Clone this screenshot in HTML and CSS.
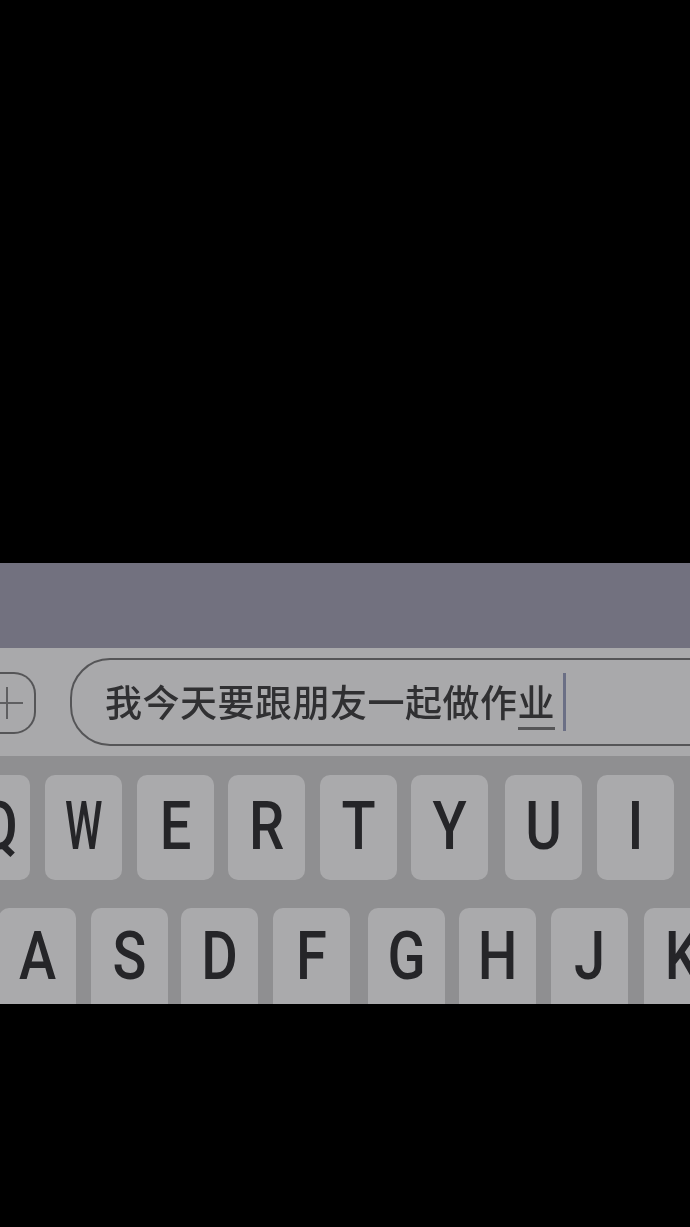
FILE: index.html
```html
<!DOCTYPE html>
<html lang="zh-CN">

<head>
	<meta charset="UTF-8">
	<meta name="viewport" content="width=device-width, initial-scale=1.0">
	<title>Keyboard</title>
	<link rel="stylesheet" href="styles.css">
</head>

<body>
	<div class="screen">
		<div class="band"></div>

		<div class="input-bar">
			<div class="plus-btn">
				<svg class="plus-icon" width="24" height="36" viewBox="0 0 24 36">
					<path d="M7 2V34M0 18H23" fill="none" stroke="#5f5f61" stroke-width="2" />
				</svg>
			</div>
			<div class="pill">
				<span class="pill-text">我今天要跟朋友一起做作<span class="composing">业</span></span>
				<span class="caret"></span>
			</div>
		</div>

		<div class="keyboard">
			<div class="row row-1">
				<div class="key key-q"><span>Q</span></div>
				<div class="key key-w"><span>W</span></div>
				<div class="key"><span>E</span></div>
				<div class="key"><span>R</span></div>
				<div class="key"><span>T</span></div>
				<div class="key"><span>Y</span></div>
				<div class="key"><span>U</span></div>
				<div class="key"><span>I</span></div>
			</div>
			<div class="row row-2">
				<div class="key"><span>A</span></div>
				<div class="key"><span>S</span></div>
				<div class="key"><span>D</span></div>
				<div class="key"><span>F</span></div>
				<div class="key"><span>G</span></div>
				<div class="key"><span>H</span></div>
				<div class="key"><span>J</span></div>
				<div class="key"><span>K</span></div>
			</div>
		</div>
	</div>
</body>

</html>
```

FILE: styles.css
```css
html, body {
	margin: 0;
	height: 1227px;
	background: #000;
	overflow: hidden;
}

.screen {
	margin-top: 563px;
	width: 690px;
	height: 441px;
	overflow: hidden;
	filter: blur(0.7px);
}

.band {
	height: 85px;
	background: #72717f;
}

.input-bar {
	display: flex;
	align-items: flex-start;
	height: 108px;
	background: #a9a9ab;
}

.plus-btn {
	display: flex;
	align-items: center;
	flex: none;
	box-sizing: border-box;
	width: 36px;
	height: 62px;
	margin-top: 24px;
	border: 2px solid #555557;
	border-left: 0;
	border-radius: 0 22px 22px 0;
}

.plus-icon {
	display: block;
}

.pill {
	display: flex;
	align-items: flex-start;
	flex: none;
	box-sizing: border-box;
	width: 680px;
	height: 88px;
	margin: 10px 0 0 34px;
	padding-left: 33px;
	border: 2px solid #555557;
	border-radius: 40px;
}

.pill-text {
	margin-top: 15px;
	font-family: "Noto Sans CJK SC", sans-serif;
	font-size: 37px;
	font-weight: 500;
	line-height: 52px;
	letter-spacing: 0.5px;
	color: #303032;
	white-space: nowrap;
}

.composing {
	display: inline-block;
	height: 52px;
	border-bottom: 3px solid #555557;
}

.caret {
	width: 3px;
	height: 58px;
	margin: 13px 0 0 8px;
	background: #6b6f85;
}

.keyboard {
	height: 248px;
	padding-top: 19px;
	box-sizing: border-box;
	background: #8f8f91;
}

.row {
	display: flex;
	gap: 15px;
}

.row-1 {
	height: 105px;
	margin-left: -47px;
	line-height: 103px;
}

.row-2 {
	height: 105px;
	margin-top: 28px;
	margin-left: -1px;
	line-height: 99px;
}

/* keys are not evenly spaced in the reference */
.row-1 .key:nth-child(4),
.row-1 .key:nth-child(6) {
	margin-left: -1px;
}

.row-1 .key:nth-child(7) {
	margin-left: 2px;
}

.row-2 .key:nth-child(3) {
	margin-left: -2px;
}

.row-2 .key:nth-child(5) {
	margin-left: 3px;
}

.row-2 .key:nth-child(6) {
	margin-left: -1px;
}

.row-2 .key:nth-child(8) {
	margin-left: 1px;
}

.key {
	display: flex;
	justify-content: center;
	flex: none;
	width: 77px;
	height: 105px;
	background: #aaaaac;
	border-radius: 10px;
	font-family: Roboto, sans-serif;
	font-weight: 500;
	font-size: 56px;
	color: #252528;
}

.key span {
	display: inline-block;
	transform: scaleY(1.2);
}

.key-q span {
	margin-left: 14px;
}

.key-w span {
	transform: scale(0.76, 1.2);
}
```
